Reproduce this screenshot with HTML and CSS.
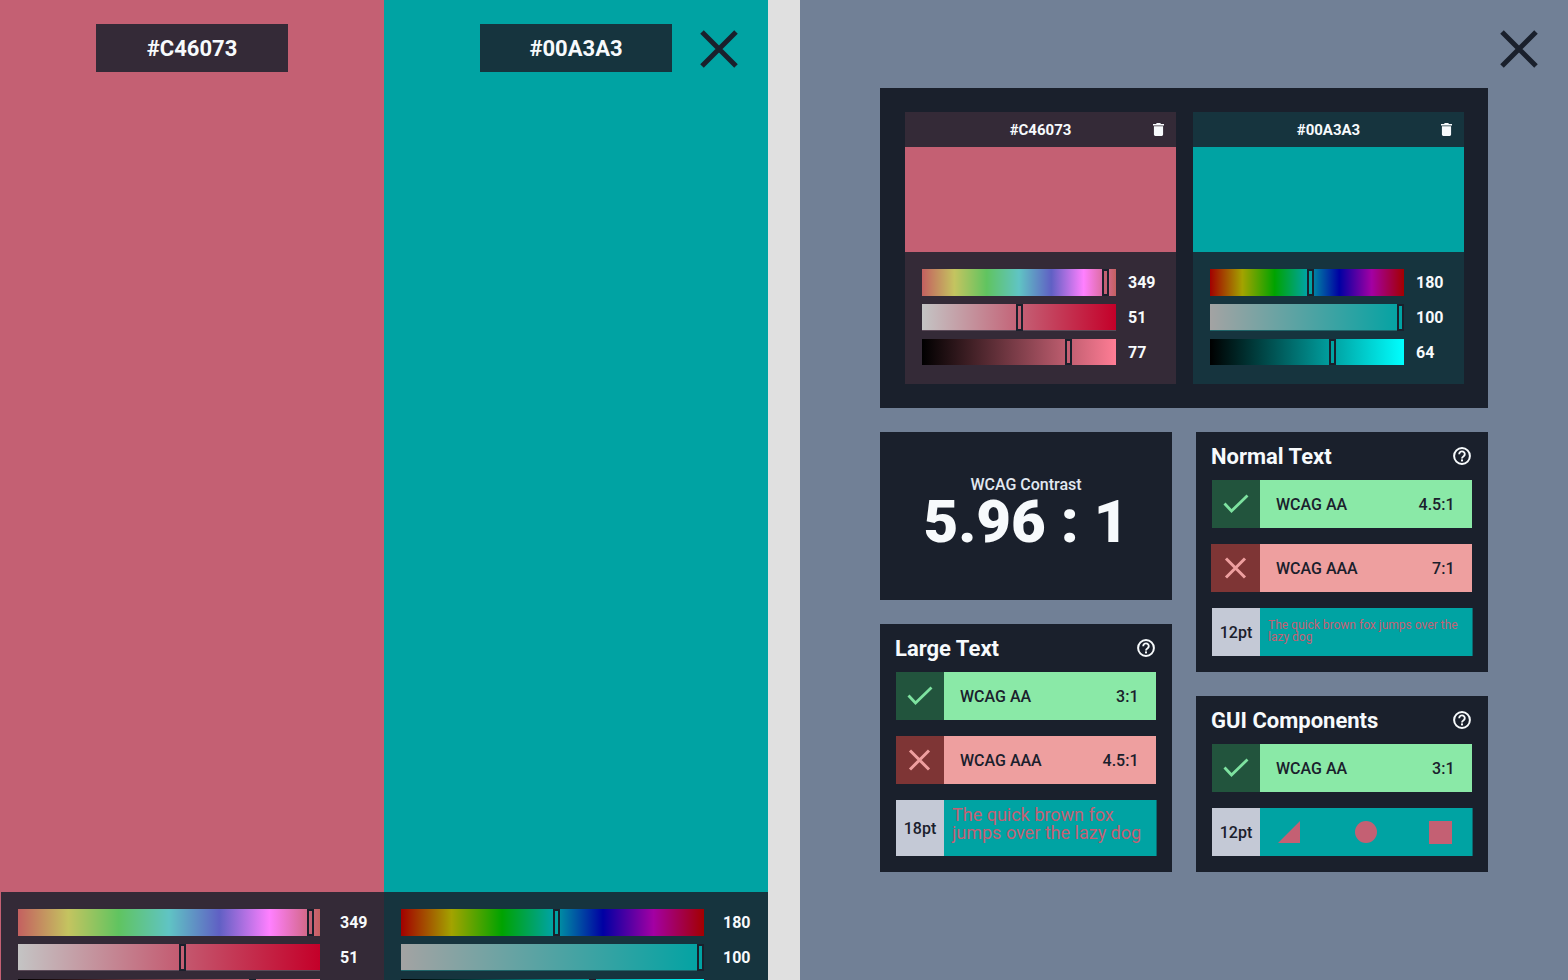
FILE: index.html
```html
<!DOCTYPE html>
<html lang="en">
<head>
<meta charset="utf-8">
<title>Color contrast</title>
<link rel="stylesheet" href="styles.css">
</head>
<body>
<svg class="defs" width="0" height="0" aria-hidden="true">
  <symbol id="close" viewBox="0 0 38 38"><path d="M2 2 36 36M36 2 2 36" fill="none" stroke="#1a202c" stroke-width="5"/></symbol>
  <symbol id="trash" viewBox="0 0 12 14"><path fill="#f7fafc" d="M4 0h4l.6 1H12v1.500H0V1h3.400zM1 3.500h10V12.500a1.500 1.500 0 0 1-1.500 1.500h-7A1.500 1.500 0 0 1 1 12.500z"/></symbol>
  <symbol id="help" viewBox="0 0 18 18"><circle cx="9" cy="9" r="7.900" fill="none" stroke="#f7fafc" stroke-width="2"/><path d="M6.200 7.200a2.800 2.700 0 1 1 4.500 2C9.600 10 9 10.400 9 11.500" fill="none" stroke="#f7fafc" stroke-width="1.900"/><rect x="8" y="12.400" width="2" height="2" fill="#f7fafc"/></symbol>
  <symbol id="check" viewBox="0 0 48 48"><path d="M12.500 23.500 19.500 31 35.500 15.500" fill="none" stroke="#7ee2a0" stroke-width="2.800"/></symbol>
  <symbol id="cross" viewBox="0 0 48 48"><path d="M14 14.500 33 33.500M33 14.500 14 33.500" fill="none" stroke="#ee9f9f" stroke-width="3"/></symbol>
</svg>
<main class="page">
  <section class="preview">
    <div class="half pink">
      <div class="stage"><div class="chip">#C46073</div></div>
      <div class="controls wide">
        <div class="slider"><div class="bar hue"><span class="thumb" style="left:289px"></span></div><span class="val">349</span></div>
        <div class="slider"><div class="bar sat"><span class="thumb" style="left:161px"></span></div><span class="val">51</span></div>
        <div class="slider"><div class="bar lum"><span class="thumb" style="left:231px"></span></div><span class="val">77</span></div>
      </div>
    </div>
    <div class="half teal">
      <div class="stage"><div class="chip">#00A3A3</div></div>
      <div class="controls wide">
        <div class="slider"><div class="bar hue"><span class="thumb" style="left:152px"></span></div><span class="val">180</span></div>
        <div class="slider"><div class="bar sat"><span class="thumb" style="left:296px"></span></div><span class="val">100</span></div>
        <div class="slider"><div class="bar lum"><span class="thumb" style="left:188px"></span></div><span class="val">64</span></div>
      </div>
    </div>
    <button class="close" aria-label="Close"><svg class="close-icon"><use href="#close"/></svg></button>
  </section>

  <div class="divider"></div>

  <section class="report">
    <button class="close" aria-label="Close"><svg class="close-icon"><use href="#close"/></svg></button>
    <div class="panel colors">
      <div class="color pink">
        <div class="color-head"><span class="color-name">#C46073</span><svg class="trash"><use href="#trash"/></svg></div>
        <div class="color-swatch"></div>
        <div class="controls narrow">
          <div class="slider"><div class="bar hue"><span class="thumb" style="left:180px"></span></div><span class="val">349</span></div>
          <div class="slider"><div class="bar sat"><span class="thumb" style="left:94px"></span></div><span class="val">51</span></div>
          <div class="slider"><div class="bar lum"><span class="thumb" style="left:143px"></span></div><span class="val">77</span></div>
        </div>
      </div>
      <div class="color teal">
        <div class="color-head"><span class="color-name">#00A3A3</span><svg class="trash"><use href="#trash"/></svg></div>
        <div class="color-swatch"></div>
        <div class="controls narrow">
          <div class="slider"><div class="bar hue"><span class="thumb" style="left:97px"></span></div><span class="val">180</span></div>
          <div class="slider"><div class="bar sat"><span class="thumb" style="left:187px"></span></div><span class="val">100</span></div>
          <div class="slider"><div class="bar lum"><span class="thumb" style="left:119px"></span></div><span class="val">64</span></div>
        </div>
      </div>
    </div>

    <div class="columns">
      <div class="column">
        <div class="panel contrast">
          <div class="contrast-label">WCAG Contrast</div>
          <div class="contrast-value">5.96 : 1</div>
        </div>
        <div class="panel result">
          <div class="result-head"><h2>Large Text</h2><svg class="help"><use href="#help"/></svg></div>
          <div class="row pass"><span class="row-icon"><svg class="mark"><use href="#check"/></svg></span><span class="row-body"><span>WCAG AA</span><span>3:1</span></span></div>
          <div class="row fail"><span class="row-icon"><svg class="mark"><use href="#cross"/></svg></span><span class="row-body"><span>WCAG AAA</span><span>4.5:1</span></span></div>
          <div class="row sample tall"><span class="size">18pt</span><span class="demo demo-large">The quick brown fox jumps over the lazy dog</span></div>
        </div>
      </div>
      <div class="column">
        <div class="panel result">
          <div class="result-head"><h2>Normal Text</h2><svg class="help"><use href="#help"/></svg></div>
          <div class="row pass"><span class="row-icon"><svg class="mark"><use href="#check"/></svg></span><span class="row-body"><span>WCAG AA</span><span>4.5:1</span></span></div>
          <div class="row fail spill"><span class="row-icon"><svg class="mark"><use href="#cross"/></svg></span><span class="row-body"><span>WCAG AAA</span><span>7:1</span></span></div>
          <div class="row sample"><span class="size">12pt</span><span class="demo demo-small">The quick brown fox jumps over the lazy dog</span></div>
        </div>
        <div class="panel result">
          <div class="result-head"><h2>GUI Components</h2><svg class="help"><use href="#help"/></svg></div>
          <div class="row pass"><span class="row-icon"><svg class="mark"><use href="#check"/></svg></span><span class="row-body"><span>WCAG AA</span><span>3:1</span></span></div>
          <div class="row sample"><span class="size">12pt</span>
            <span class="demo shapes">
              <svg class="shape" viewBox="0 0 22 22"><path d="M0 22 22 0V22z" fill="#c46073"/></svg>
              <svg class="shape round" viewBox="0 0 22 22"><circle cx="11" cy="11" r="11" fill="#c46073"/></svg>
              <svg class="shape square" viewBox="0 0 23 23"><rect width="23" height="23" fill="#c46073"/></svg>
            </span>
          </div>
        </div>
      </div>
    </div>
  </section>
</main>
</body>
</html>
```
FILE: styles.css
```css
* { box-sizing: border-box; }
html, body { margin: 0; height: 100%; overflow: hidden; }
body { font-family: Roboto, "Liberation Sans", sans-serif; color: #f7fafc; background: #e0e0e0; }
.defs { position: absolute; }
.page { display: flex; width: 1568px; height: 980px; overflow: hidden; }

.preview { position: relative; display: flex; width: 768px; height: 980px; overflow: hidden; flex: none; }
.divider { width: 32px; flex: none; background: #e0e0e0; }
.report { position: relative; width: 768px; flex: none; background: #718096; padding: 88px 80px 0; }

.close { position: absolute; top: 30px; right: 30px; width: 38px; height: 38px; padding: 0; border: 0; background: none; }
.close-icon { display: block; width: 38px; height: 38px; }

.pink { --base: #c46073; --deep: #342a37; --edge: #5a4a58;
  --hue: linear-gradient(90deg, #c46060, #c4c460 16.67%, #60c460 33.33%, #60c4c4 50%, #6060c4 66.67%, #ff80ff 83.33%, #c46060);
  --sat: linear-gradient(90deg, #c4c4c4, #c40029);
  --lum: linear-gradient(90deg, #000, #ff7d95); }
.teal { --base: #00a3a3; --deep: #16343e; --edge: #1f6468;
  --hue: linear-gradient(90deg, #a30000, #a3a300 16.67%, #00a300 33.33%, #00a3a3 50%, #0000a3 66.67%, #a300a3 83.33%, #a30000);
  --sat: linear-gradient(90deg, #a3a3a3, #00a3a3);
  --lum: linear-gradient(90deg, #000, #0ff); }

.half { width: 384px; flex: none; background: var(--base); display: flex; flex-direction: column; }
.stage { flex: 0 0 892px; display: flex; justify-content: center; align-items: flex-start; padding-top: 24px; }
.chip { width: 192px; height: 48px; display: flex; align-items: center; justify-content: center; background: var(--deep); font-size: 22px; font-weight: 700; }

.controls { background: var(--deep); padding: 17px 0 18px 17px; display: flex; flex-direction: column; gap: 8px; flex: none; }
.half.pink .controls { margin-left: 1px; }
.slider { display: grid; align-items: start; height: 27px; }
.wide .slider { grid-template-columns: 1fr 64px; }
.narrow .slider { grid-template-columns: 1fr 60px; }
.val { font-size: 16px; font-weight: 700; line-height: 27px; }
.wide .val { padding-left: 19px; }
.half.pink .wide .val { padding-left: 20px; }
.narrow .val { padding-left: 12px; }

.bar { position: relative; height: 26px; }
.bar.hue { height: 27px; background: var(--hue); }
.bar.sat { height: 27px; background: var(--sat) top / 100% 26px no-repeat, var(--edge); }
.bar.lum { background: var(--lum); }
.thumb { position: absolute; top: 0; bottom: 0; width: 7px; border: 2px solid #1a202c; background: var(--base); }

.panel { background: #1a202c; }
.colors { display: grid; grid-template-columns: 271px 271px; column-gap: 17px; padding: 24px 24px 24px 25px; width: 608px; height: 320px; }
.color { background: var(--deep); display: flex; flex-direction: column; }
.color-head { height: 35px; display: grid; grid-template-columns: 1fr auto 1fr; align-items: center; padding: 0 12px; }
.color-name { grid-column: 2; font-size: 15px; font-weight: 700; }
.trash { grid-column: 3; justify-self: end; width: 11px; height: 13px; }
.color-swatch { height: 105px; background: var(--base); }

.columns { display: flex; gap: 24px; margin-top: 24px; width: 608px; }
.column { flex: 0 0 292px; display: flex; flex-direction: column; gap: 24px; }

.contrast { height: 168px; display: flex; flex-direction: column; align-items: center; padding-top: 44px; }
.contrast-label { font-size: 16px; font-weight: 500; line-height: 18px; color: #e2e8f0; }
.contrast-value { font-size: 60px; font-weight: 900; line-height: 56px; margin-top: 0; }

.result { padding: 0 16px 16px; display: flex; flex-direction: column; gap: 16px; }
.result-head { height: 48px; margin-bottom: -16px; display: flex; align-items: center; justify-content: space-between; margin-left: -1px; }
.result-head h2 { margin: 0; font-size: 22px; font-weight: 700; }
.help { width: 18px; height: 18px; margin-right: 1px; }

.row { display: flex; height: 48px; color: #1a202c; font-size: 16px; font-weight: 500; }
.row.tall { height: 56px; }
.row.spill { box-shadow: -1px 0 #7e3535; }
.row-icon { width: 48px; flex: none; display: flex; }
.mark { width: 48px; height: 48px; }
.row-body { flex: 1; display: flex; align-items: center; justify-content: space-between; padding: 0 17.500px 0 16px; }
.pass .row-icon { background: #22543d; }
.pass .row-body { background: #8ae9a7; }
.fail .row-icon { background: #7e3535; }
.fail .row-body { background: #ee9f9f; }

.size { width: 48px; flex: none; background: #c4c9d6; display: flex; align-items: center; justify-content: center; }
.demo { flex: 1; background: #00a3a3; color: #c46073; font-weight: 400; padding-left: 8px; display: flex; align-items: center; border-right: 1px solid #0b6a70; margin-right: -1px; }
.demo-small { font-size: 12px; line-height: 12px; padding-bottom: 2px; }
.demo-large { font-size: 18px; line-height: 18px; padding-bottom: 8px; }
.shapes { justify-content: space-between; padding: 0 20px 0 18px; }
.shape { width: 22px; height: 22px; }
.shape.round { margin-left: 3px; }
.shape.square { width: 23px; height: 23px; }
```
